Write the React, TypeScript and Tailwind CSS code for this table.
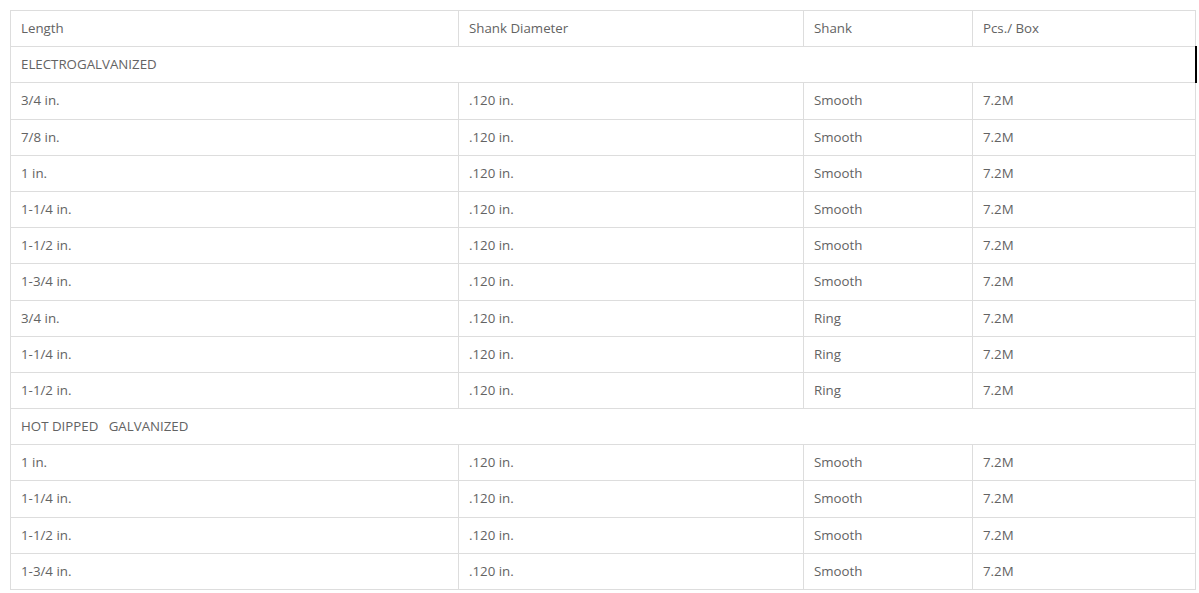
import React from "react";

type Row = [string, string, string, string];

const electro: Row[] = [
  ["3/4 in.", ".120 in.", "Smooth", "7.2M"],
  ["7/8 in.", ".120 in.", "Smooth", "7.2M"],
  ["1 in.", ".120 in.", "Smooth", "7.2M"],
  ["1-1/4 in.", ".120 in.", "Smooth", "7.2M"],
  ["1-1/2 in.", ".120 in.", "Smooth", "7.2M"],
  ["1-3/4 in.", ".120 in.", "Smooth", "7.2M"],
  ["3/4 in.", ".120 in.", "Ring", "7.2M"],
  ["1-1/4 in.", ".120 in.", "Ring", "7.2M"],
  ["1-1/2 in.", ".120 in.", "Ring", "7.2M"],
];

const hot: Row[] = [
  ["1 in.", ".120 in.", "Smooth", "7.2M"],
  ["1-1/4 in.", ".120 in.", "Smooth", "7.2M"],
  ["1-1/2 in.", ".120 in.", "Smooth", "7.2M"],
  ["1-3/4 in.", ".120 in.", "Smooth", "7.2M"],
];

const td = "border border-[#dddddd] px-[10px] py-2 text-left font-normal align-middle";

function DataRows({ rows }: { rows: Row[] }) {
  return (
    <>
      {rows.map((r, i) => (
        <tr key={i}>
          {r.map((c, j) => (
            <td key={j} className={td}>
              {c}
            </td>
          ))}
        </tr>
      ))}
    </>
  );
}

export default function App() {
  return (
    <div className="bg-white w-[1199px] h-[593px] overflow-hidden pt-[10px] pl-[10px]">
      <table
        className="border-collapse w-[1185px] table-fixed text-[13.3px] leading-[19.19px] text-[#636363]"
        style={{ fontFamily: '"Open Sans", "Noto Sans", sans-serif' }}
      >
        <colgroup>
          <col className="w-[448px]" />
          <col className="w-[345px]" />
          <col className="w-[169px]" />
          <col className="w-[223px]" />
        </colgroup>
        <thead>
          <tr>
            <th className={td}>Length</th>
            <th className={td}>Shank Diameter</th>
            <th className={td}>Shank</th>
            <th className={td}>Pcs./ Box</th>
          </tr>
        </thead>
        <tbody>
          <tr>
            <td colSpan={4} className={td + " border-r-[#000000] border-r-2"}>
              ELECTROGALVANIZED
            </td>
          </tr>
          <DataRows rows={electro} />
          <tr>
            <td colSpan={4} className={td}>
              HOT DIPPED&nbsp;&nbsp;&nbsp;GALVANIZED
            </td>
          </tr>
          <DataRows rows={hot} />
        </tbody>
      </table>
    </div>
  );
}
